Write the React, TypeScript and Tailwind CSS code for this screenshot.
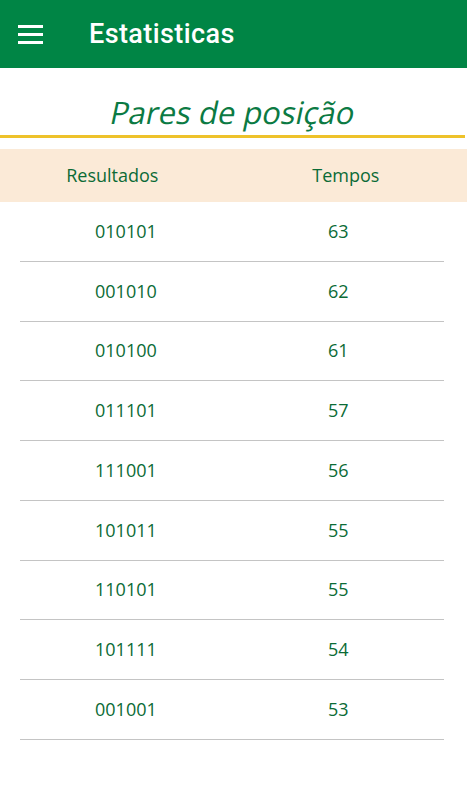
import React from 'react';

const rows: [string, string][] = [
  ['010101', '63'],
  ['001010', '62'],
  ['010100', '61'],
  ['011101', '57'],
  ['111001', '56'],
  ['101011', '55'],
  ['110101', '55'],
  ['101111', '54'],
  ['001001', '53'],
];

export default function App() {
  return (
    <div className="w-[467px] h-[800px] bg-white flex flex-col overflow-hidden">
      <header className="h-[68px] bg-[#008545] flex items-center shrink-0">
        <div className="w-[89px] pl-[18px] flex flex-col gap-[5px]">
          <span className="block w-[25px] h-[3px] bg-white" />
          <span className="block w-[25px] h-[3px] bg-white" />
          <span className="block w-[25px] h-[3px] bg-white" />
        </div>
        <h1 className="text-white text-[27px] font-medium tracking-[0.4px] font-['Roboto',sans-serif] leading-none">
          Estatisticas
        </h1>
      </header>

      <div className="pt-[24px] h-[67px] text-center">
        <span className="inline-block -skew-x-12 text-[#0b7a43] font-normal text-[31px] leading-[40px] font-['Open_Sans',sans-serif]">
          Pares de posição
        </span>
      </div>
      <div className="h-[3px] bg-[#eec22a] mr-[2px]" />

      <div className="mt-[11px] h-[53px] bg-[#fbead7] flex items-center text-[#0b6b36] text-[18px] font-['Open_Sans',sans-serif]">
        <div className="w-[228px] text-center">Resultados</div>
        <div className="w-[246px] text-center">Tempos</div>
      </div>

      <div className="mx-[20px] w-[424px] font-['Open_Sans',sans-serif] text-[#0b6b36] text-[18px]">
        {rows.map(([r, t], i) => (
          <div key={i} className="h-[59.75px] flex items-center border-b border-[#c4c4c4]">
            <div className="w-[308px] pl-[75px]">{r}</div>
            <div>{t}</div>
          </div>
        ))}
      </div>
    </div>
  );
}
